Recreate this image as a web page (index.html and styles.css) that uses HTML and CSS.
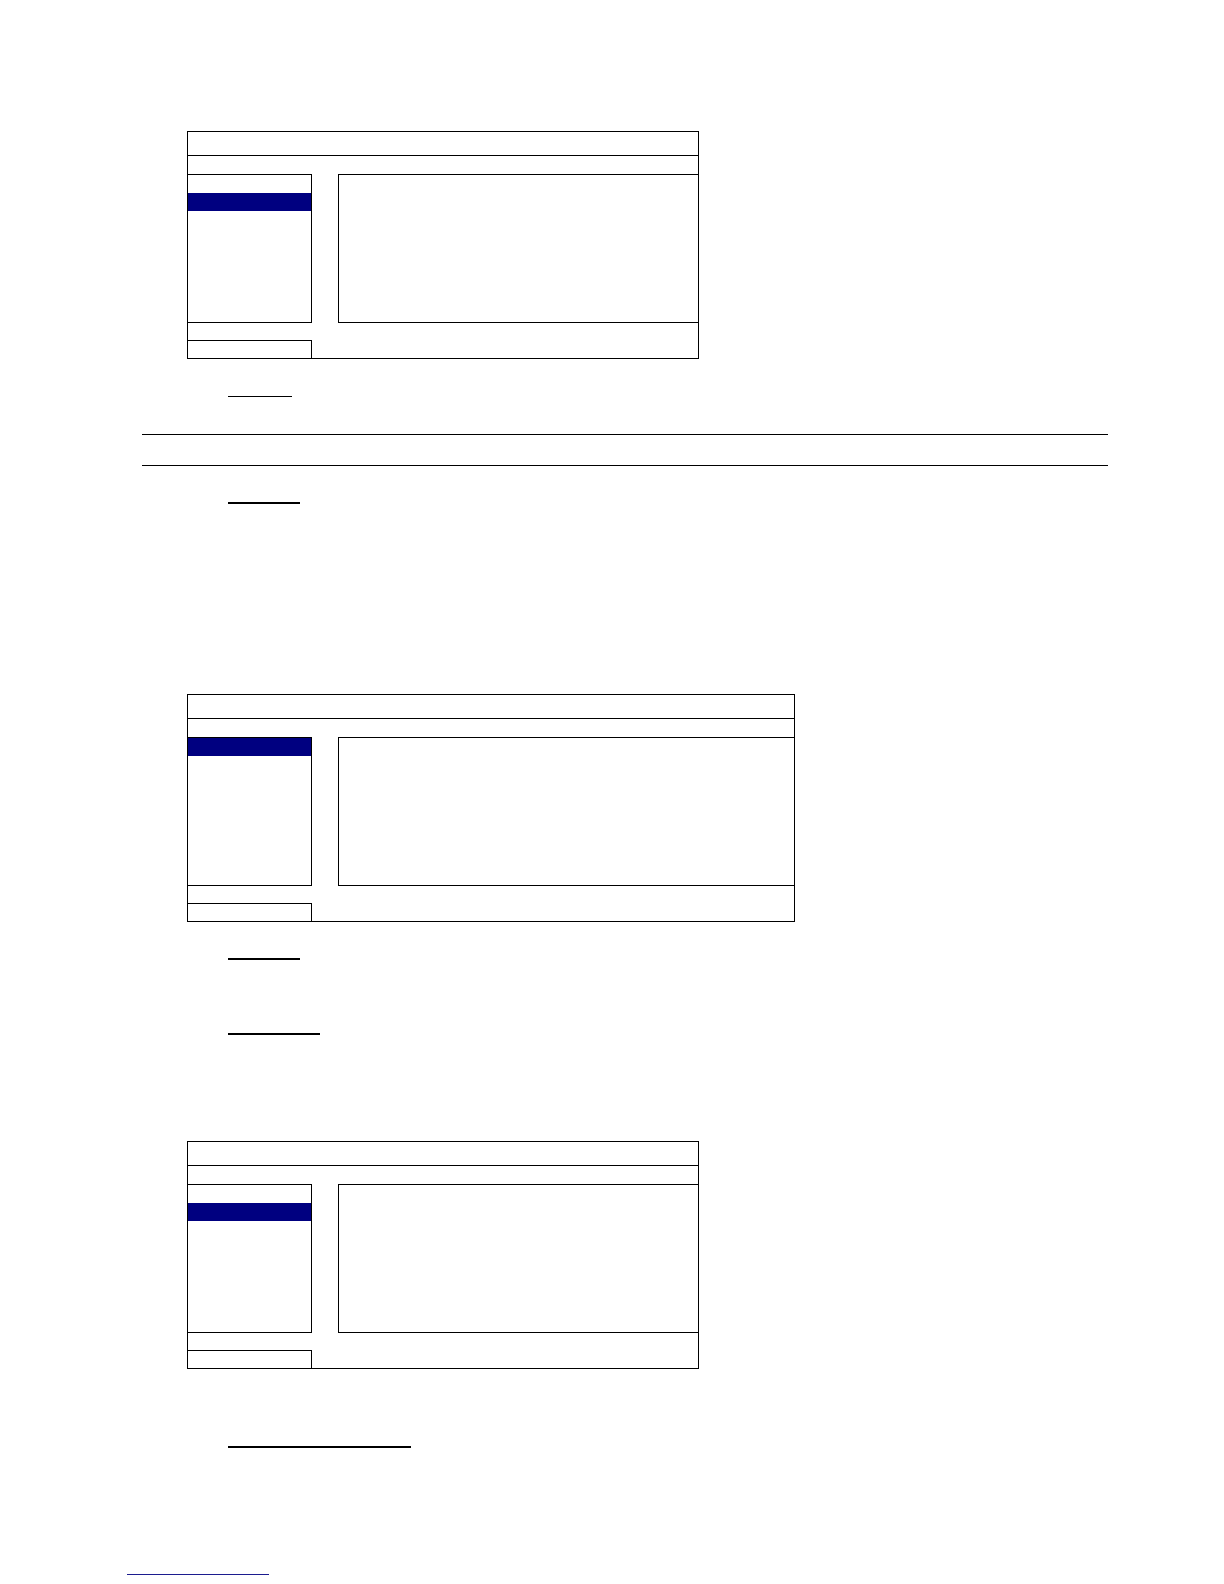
FILE: index.html
```html
<!DOCTYPE html>
<html lang="en">
<head>
<meta charset="utf-8">
<title>Menu</title>
<link rel="stylesheet" href="styles.css">
</head>
<body>
<div class="page">
  <div class="dlg dlg-narrow fig1">
    <div class="dlg-title"></div>
    <div class="dlg-sub"></div>
    <div class="dlg-body">
      <div class="list">
        <div class="row"></div>
        <div class="row sel"></div>
      </div>
      <div class="content"></div>
    </div>
    <div class="dlg-foot"><div class="foot-box"></div></div>
  </div>

  <div class="uline thin ul1"></div>
  <div class="rule rule1"></div>
  <div class="rule rule2"></div>
  <div class="uline thick ul2"></div>

  <div class="dlg dlg-wide fig2">
    <div class="dlg-title"></div>
    <div class="dlg-sub"></div>
    <div class="dlg-body">
      <div class="list">
        <div class="row sel"></div>
      </div>
      <div class="content"></div>
    </div>
    <div class="dlg-foot"><div class="foot-box"></div></div>
  </div>

  <div class="uline thick ul3"></div>
  <div class="uline thick ul4"></div>

  <div class="dlg dlg-narrow fig3">
    <div class="dlg-title"></div>
    <div class="dlg-sub"></div>
    <div class="dlg-body">
      <div class="list">
        <div class="row"></div>
        <div class="row sel"></div>
      </div>
      <div class="content"></div>
    </div>
    <div class="dlg-foot"><div class="foot-box"></div></div>
  </div>

  <div class="uline thick ul5"></div>
  <div class="link-line"></div>
</div>
</body>
</html>
```

FILE: styles.css
```css
html, body {
  margin: 0;
  padding: 0;
  background: #ffffff;
  font-family: "Liberation Sans", Arial, sans-serif;
}

.page {
  display: flex;
  flex-direction: column;
  align-items: flex-start;
  width: 1224px;
  min-height: 1584px;
}

.dlg {
  box-sizing: border-box;
  border: 1px solid #000;
  margin-left: 187px;
  display: flex;
  flex-direction: column;
}
.dlg-narrow { width: 512px; }
.dlg-wide { width: 608px; }

.fig1 { margin-top: 131px; }
.fig2 { margin-top: 190px; }
.fig3 { margin-top: 106px; }

.dlg-title {
  height: 23px;
  border-bottom: 1px solid #000;
}
.dlg-sub {
  height: 18px;
}
.dlg-body {
  display: flex;
  gap: 26px;
}
.list {
  width: 123px;
  height: 147px;
  border-top: 1px solid #000;
  border-right: 1px solid #000;
  border-bottom: 1px solid #000;
}
.row {
  height: 18px;
}
.row.sel {
  background: #000080;
}
.content {
  flex: 1;
  height: 147px;
  border-top: 1px solid #000;
  border-left: 1px solid #000;
  border-bottom: 1px solid #000;
}
.dlg-foot {
  padding-top: 17px;
}
.foot-box {
  width: 123px;
  height: 17px;
  border-top: 1px solid #000;
  border-right: 1px solid #000;
}

.uline {
  margin-left: 228px;
  background: #000;
}
.uline.thin { height: 1px; }
.uline.thick { height: 2px; }
.ul1 { margin-top: 37px; width: 64px; }
.ul2 { margin-top: 36px; width: 72px; }
.ul3 { margin-top: 36px; width: 72px; }
.ul4 { margin-top: 73px; width: 92px; }
.ul5 { margin-top: 77px; width: 183px; }

.rule {
  margin-left: 142px;
  width: 966px;
  height: 1px;
  background: #000;
}
.rule1 { margin-top: 37px; }
.rule2 { margin-top: 30px; }

.link-line {
  margin-top: 126px;
  margin-left: 127px;
  width: 142px;
  height: 1px;
  background: #1c1c8f;
}
```
